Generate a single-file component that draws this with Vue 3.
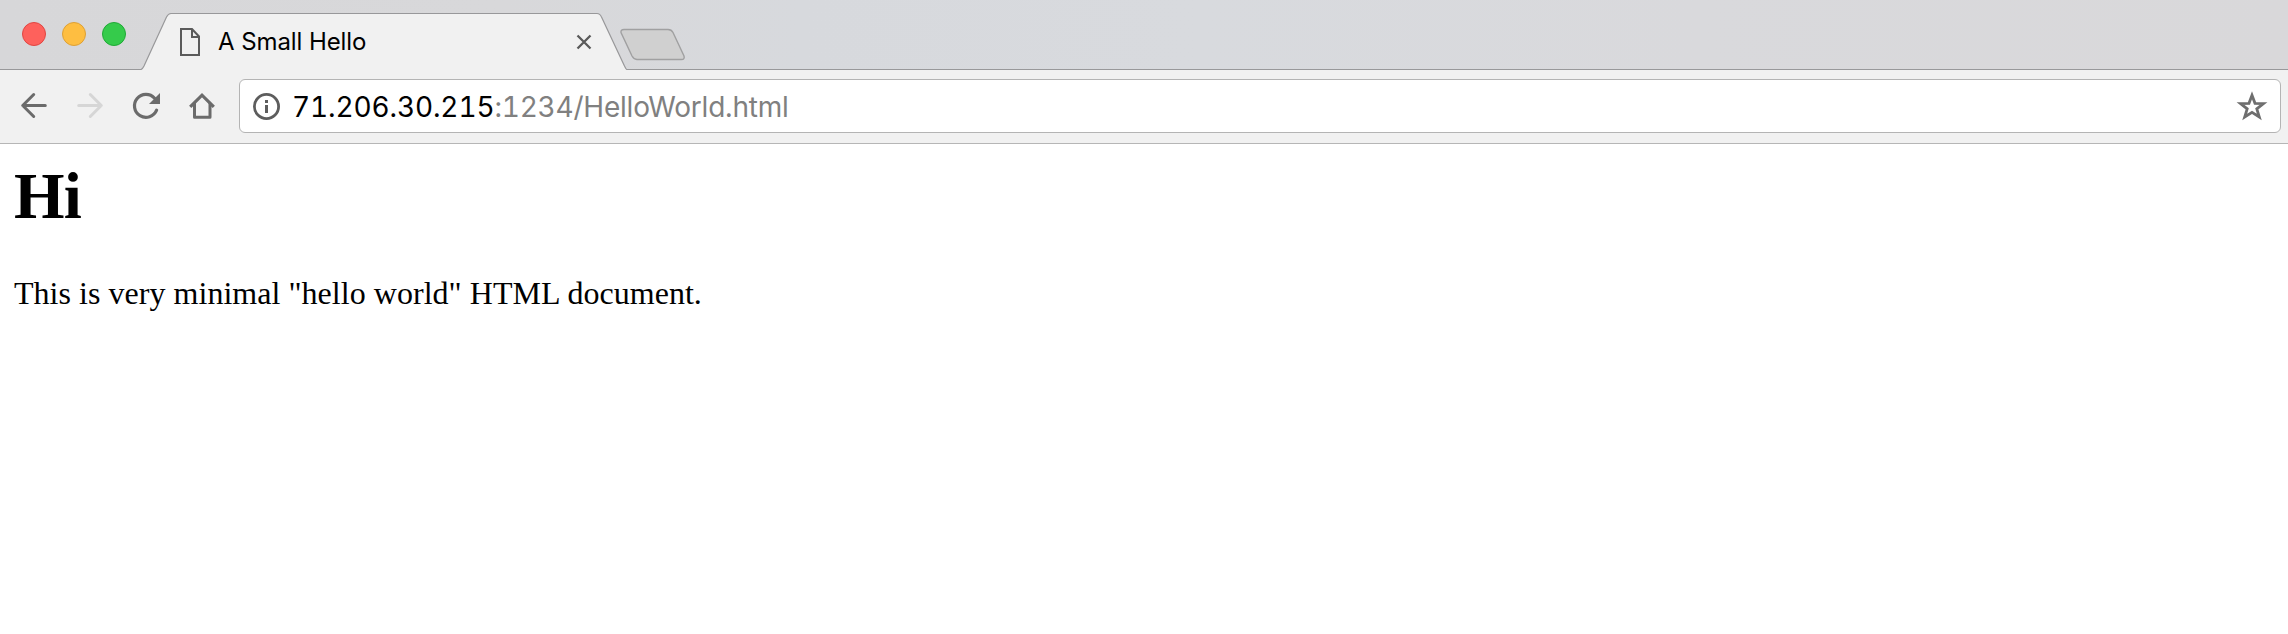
<script setup>
const title = 'A Small Hello'
const host = '71.206.30.215'
const path = ':1234/HelloWorld.html'
const lights = ['close', 'minimise', 'zoom']
</script>

<template>
  <div class="window">
    <header class="strip">
      <div class="lights">
        <span v-for="l in lights" :key="l" class="light" :class="l"></span>
      </div>
      <div class="tab">
        <svg class="tab-shape" width="486" height="58" viewBox="0 0 486 58">
          <path d="M0 57.5 C1.5 57 2 56 3 54 L25.5 5 Q27.3 1.5 30 1.5 H456 Q459 1.5 460.5 5 L483 53 Q485 57.5 486 57.5 V58 H0Z" fill="#f1f1f1" />
          <path d="M0 57.5 C1.5 57 2 56 3 54 L25.5 5 Q27.3 1.5 30 1.5 H456 Q459 1.5 460.5 5 L483 53 Q485 57.5 486 57.5" fill="none" stroke="#98989a" stroke-width="1.2" />
        </svg>
        <svg class="doc" width="20" height="28" viewBox="0 0 20 28" fill="none" stroke="#5b5b5b" stroke-width="2">
          <path d="M1 1H12L19 8.5V27H1Z" />
          <path d="M12 1V9H19" />
        </svg>
        <span class="tab-title">{{ title }}</span>
        <svg class="close-x" width="16" height="16" viewBox="0 0 16 16" fill="none" stroke="#5a5a5a" stroke-width="2.3">
          <path d="M1.5 1.5L14.5 14.5M14.5 1.5L1.5 14.5" />
        </svg>
      </div>
      <svg class="new-tab" width="66" height="33" viewBox="0 0 66 33">
        <path d="M4 1.5H48Q51.5 1.5 53 4.5L64 28Q65 31.5 61.5 31.5H17Q13.5 31 12 28L1 4.5Q0.5 1.5 4 1.5Z" fill="#d0d0d0" stroke="#a0a0a1" stroke-width="1.4" />
      </svg>
    </header>

    <nav class="toolbar">
      <svg class="icon" width="32" height="32" viewBox="18 90 32 32" fill="none" stroke="#6b6b6b" stroke-width="3" stroke-linecap="round" stroke-linejoin="round">
        <path d="M45.3 105.5H23M33.7 94.5L22.7 105.5L33.7 116.5" />
      </svg>
      <svg class="icon" width="32" height="32" viewBox="74 90 32 32" fill="none" stroke="#d6d6d6" stroke-width="3" stroke-linecap="round" stroke-linejoin="round">
        <path d="M78.7 105.5H101M90.3 94.5L101.3 105.5L90.3 116.5" />
      </svg>
      <svg class="icon" width="32" height="32" viewBox="130 90 32 32">
        <path d="M154.6 98.2A11.5 11.5 0 1 0 156.6 110.2" fill="none" stroke="#6b6b6b" stroke-width="3.2" stroke-linecap="round" />
        <path d="M160 93V104H149Z" fill="#6b6b6b" />
      </svg>
      <svg class="icon" width="32" height="32" viewBox="186 90 32 32" fill="none" stroke="#6b6b6b" stroke-width="3">
        <path d="M190.2 106.8L202 95.2L213.8 106.8" stroke-width="3.2" />
        <path d="M194.5 103V117.3H210V103" stroke-linejoin="round" />
      </svg>
      <div class="address">
        <svg class="info" width="28" height="28" viewBox="0 0 28 28">
          <circle cx="13.5" cy="13.5" r="12.1" fill="none" stroke="#5d5d5d" stroke-width="2.8" />
          <path d="M12 7H15V10H12ZM12 12H15V20H12Z" fill="#5d5d5d" />
        </svg>
        <span class="url"><span class="host">{{ host }}</span><span class="path">{{ path }}</span></span>
        <svg class="star" width="32" height="32" viewBox="2236 90 32 32" fill="none" stroke="#6e6e6e" stroke-width="2.8">
          <path d="M2252 95.2L2255 103.3L2263.5 103.5L2256.8 108.8L2259.3 117L2252 112.3L2244.7 117L2247.2 108.8L2240.5 103.5L2249 103.3Z" />
        </svg>
      </div>
    </nav>

    <main class="page">
      <h1>Hi</h1>
      <p>This is very minimal "hello world" HTML document.</p>
    </main>
  </div>
</template>

<style>
body {
  margin: 0;
  background: #fff;
}
</style>

<style scoped>
.window {
  width: 2288px;
  height: 634px;
  overflow: hidden;
  background: #fff;
}
.strip {
  box-sizing: border-box;
  display: flex;
  align-items: flex-start;
  height: 70px;
  border-bottom: 1px solid #98989a;
  background: linear-gradient(90deg, #d7d7d9 0, #d8d8da 500px, #d7d9dd 800px, #d8dade 1200px, #d9d9dc 1700px, #d9d8da 100%);
}
.lights {
  display: flex;
  gap: 16px;
  padding: 22px 15px 0 22px;
}
.light {
  box-sizing: border-box;
  width: 24px;
  height: 24px;
  border-radius: 50%;
  border: 1px solid;
}
.close { background: #fe615c; border-color: #e04642; }
.minimise { background: #febe41; border-color: #dda036; }
.zoom { background: #35cb4b; border-color: #20a936; }
.tab {
  position: relative;
  box-sizing: border-box;
  display: flex;
  width: 486px;
  height: 58px;
  margin-top: 12px;
  padding-left: 39px;
}
.tab-shape {
  position: absolute;
  left: 0;
  top: 0;
}
.doc {
  position: relative;
  margin-top: 16px;
}
.tab-title {
  position: relative;
  width: 338px;
  margin: 15px 0 0 18px;
  font: 24px/30px Inter, "Liberation Sans", sans-serif;
  letter-spacing: -0.08px;
  color: #000;
  white-space: nowrap;
}
.close-x {
  position: relative;
  margin: 22px 0 0 20px;
}
.new-tab {
  margin: 28px 0 0 -7px;
}
.tab-title, .close-x { flex: none; }
.toolbar {
  box-sizing: border-box;
  display: flex;
  gap: 24px;
  height: 74px;
  padding: 9px 7px 10px 18px;
  border-bottom: 1px solid #b6b6b6;
  background: #f1f1f1;
}
.icon {
  flex: none;
  margin-top: 11px;
}
.address {
  box-sizing: border-box;
  display: flex;
  flex: 1;
  height: 54px;
  margin-left: -3px;
  border: 1px solid #b4b4b4;
  border-radius: 6px;
  background: #fff;
}
.info {
  margin: 13px 0 0 13px;
}
.url {
  flex: 1;
  margin: 9px 0 0 11px;
  font: 28px/36px Inter, "Liberation Sans", sans-serif;
  font-variant-numeric: tabular-nums;
  white-space: nowrap;
}
.host { color: #000; letter-spacing: -0.13px; }
.path { color: #808080; letter-spacing: -0.22px; }
.star {
  margin: 10px 12px 0 0;
}
.page {
  padding: 15px 14px;
  font-family: "Liberation Serif", serif;
  color: #000;
}
h1 {
  margin: 0;
  font-size: 65px;
  line-height: 75px;
  letter-spacing: -0.8px;
}
p {
  margin: 41px 0 0;
  font-size: 32px;
  line-height: 36px;
  letter-spacing: 0.035px;
}
</style>
